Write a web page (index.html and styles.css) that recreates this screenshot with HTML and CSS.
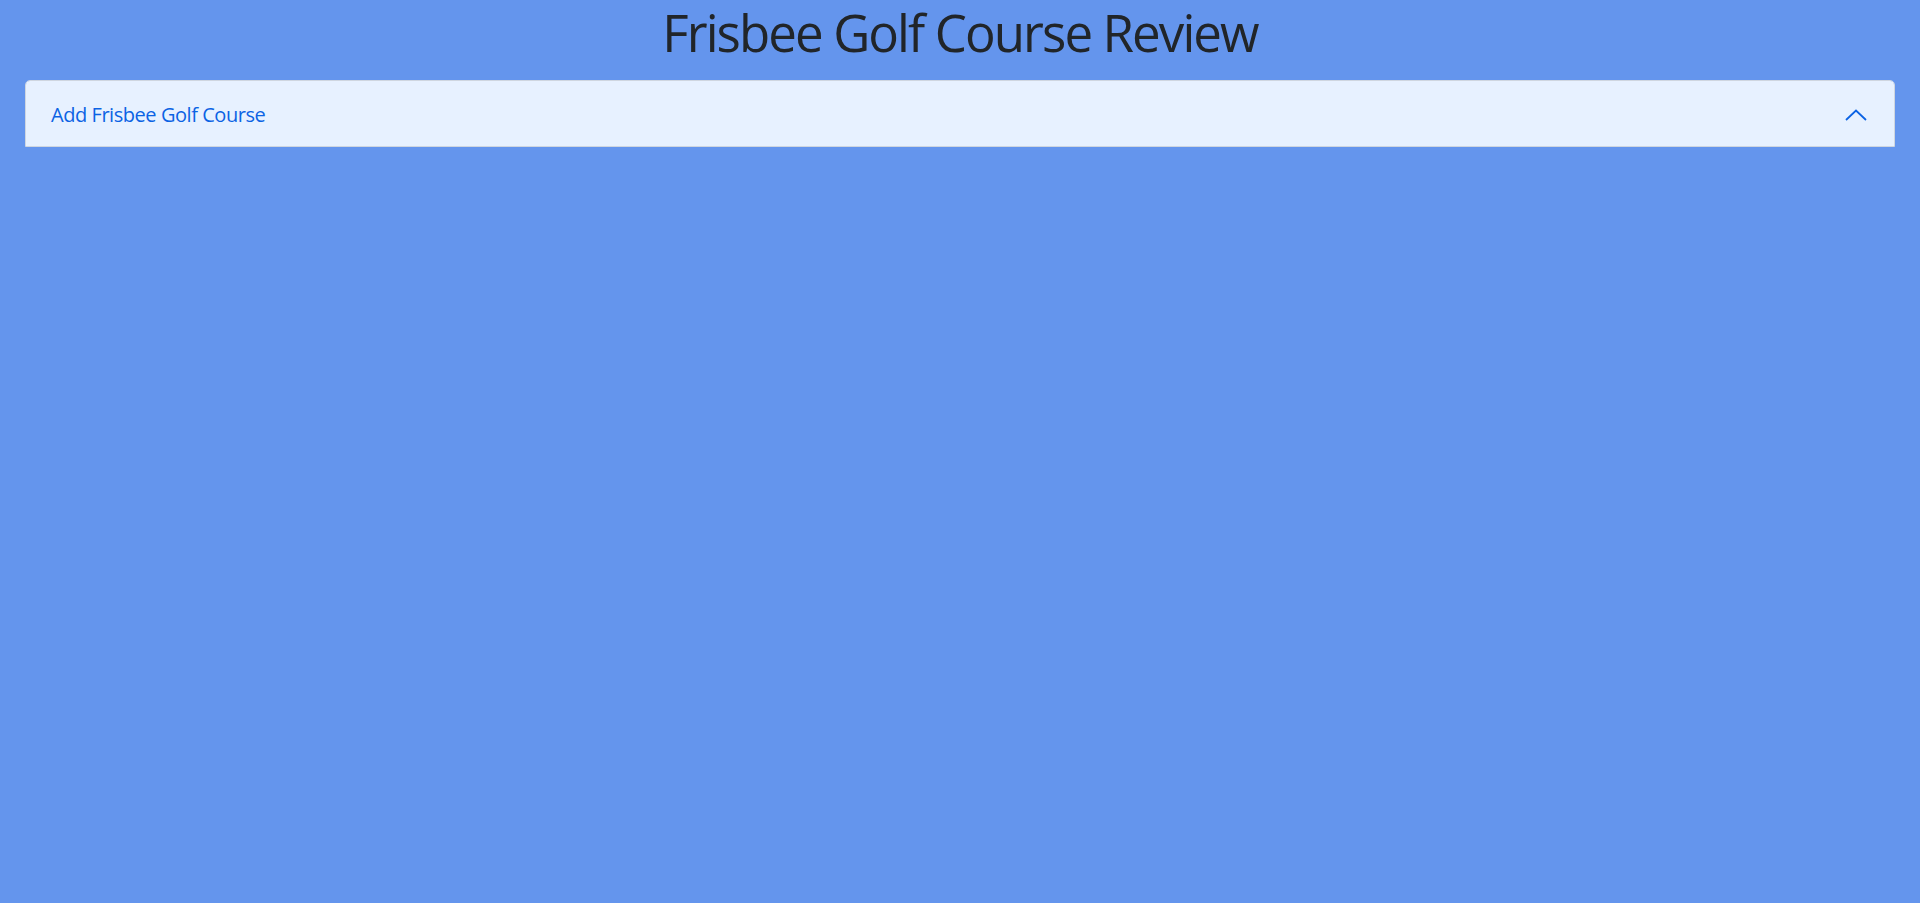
FILE: index.html
```html
<!DOCTYPE html>
<html lang="en">
<head>
<meta charset="utf-8">
<title>Frisbee Golf Course Review</title>
<link rel="stylesheet" href="styles.css">
</head>
<body>
<h1 class="page-title">Frisbee Golf Course Review</h1>
<main class="container">
  <div class="accordion">
    <div class="accordion-item">
      <button class="accordion-button" type="button">
        <span class="accordion-label">Add Frisbee Golf Course</span>
        <svg class="chevron" width="22" height="12" viewBox="0 0 22 12" aria-hidden="true">
          <path d="M1 11 L11 1.5 L21 11" fill="none" stroke="#0c63e4" stroke-width="1.8"/>
        </svg>
      </button>
    </div>
  </div>
</main>
</body>
</html>
```
FILE: styles.css
```css
html, body {
  margin: 0;
  padding: 0;
}
body {
  background: #6495ed;
  color: #212529;
  font-family: "Open Sans", "Noto Sans", sans-serif;
  min-height: 903px;
}
.page-title {
  margin: 0;
  padding-top: 3px;
  font-size: 51px;
  line-height: 58px;
  font-weight: 400;
  letter-spacing: -1.9px;
  text-align: center;
  color: #212529;
}
.container {
  padding: 19px 25px 0 25px;
}
.accordion-item {
  background: #e7f1ff;
  border: 1px solid #cfd6e0;
  border-radius: 5px 5px 0 0;
  overflow: hidden;
}
.accordion-button {
  display: flex;
  align-items: center;
  justify-content: space-between;
  width: 100%;
  box-sizing: border-box;
  height: 65px;
  padding: 2px 27px 0 25px;
  border: 0;
  background: #e7f1ff;
  color: #0c63e4;
  font-family: inherit;
  font-size: 20px;
  line-height: 30px;
  letter-spacing: -0.45px;
  text-align: left;
  cursor: pointer;
}
.chevron {
  display: block;
  flex: none;
}
```
